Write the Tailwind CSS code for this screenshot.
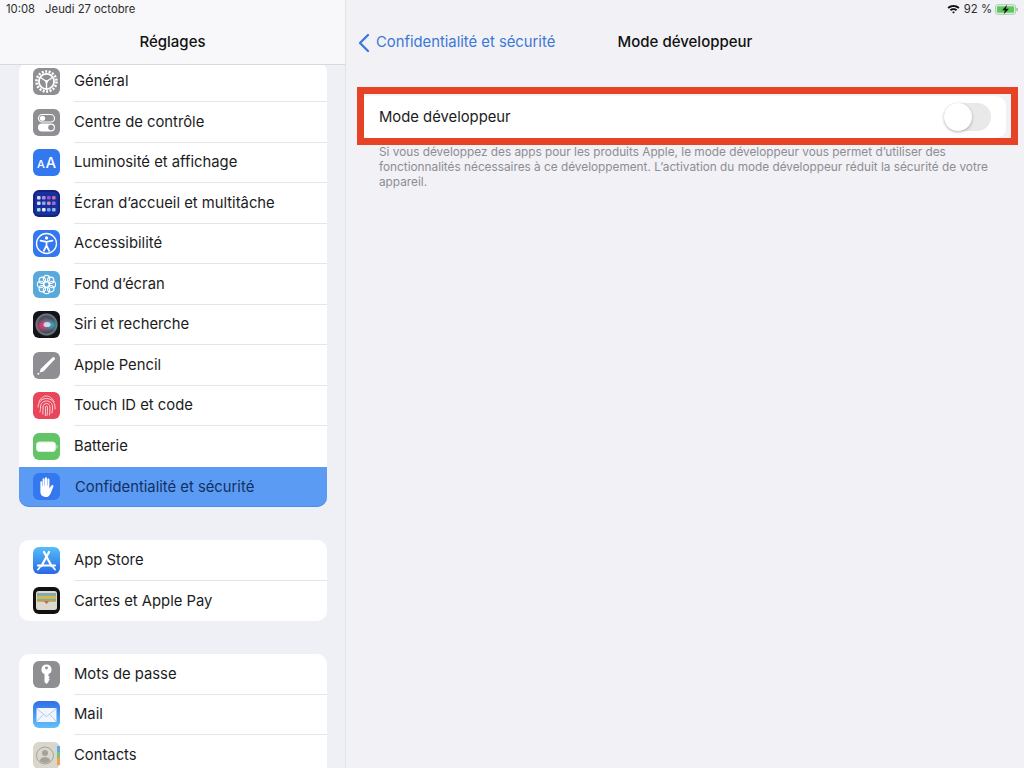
<!DOCTYPE html>
<html lang="fr">
<head>
  <meta charset="UTF-8">
  <title>Réglages - Mode développeur</title>
  <script src="https://cdn.jsdelivr.net/npm/@tailwindcss/browser@4"></script>
</head>
<body class="bg-[#f1f1f6] text-[#1c1c1e] font-['Inter',sans-serif] overflow-hidden">
<div class="flex w-[1024px] h-[768px] overflow-hidden">

  <!-- colonne des reglages -->
  <aside class="w-[346px] h-full shrink-0 bg-[#eff0f6] border-r border-[#e2e2e7] overflow-hidden">
    <header class="relative z-10 h-[65px] bg-[#f8f8fa] border-b border-[#d9d9dd]">
      <div class="flex gap-[10px] pl-[6px] pt-[2px] text-[11.3px] leading-[14px] text-[#2c2c2e]">
        <span>10:08</span><span>Jeudi 27 octobre</span>
      </div>
      <h1 class="mt-[16px] text-center text-[15px] leading-[20px] font-medium text-[#111]">Réglages</h1>
    </header>

    <div class="-mt-[3.5px] ml-[19px] w-[308px] flex flex-col gap-[33px] text-[14.8px]">
      <ul class="bg-white rounded-[10px]">
        <li class="flex h-[40.5px] items-center pl-[14px]">
          <svg class="w-[27px] h-[27px] shrink-0" viewBox="0 0 27 27"><rect width="27" height="27" rx="6" fill="#8e8e93"/><circle cx="13.5" cy="13.5" r="10" fill="none" stroke="#fff" stroke-width="2.6" stroke-dasharray="2 1.5"/><circle cx="13.5" cy="13.5" r="7.6" fill="none" stroke="#fff" stroke-width="1.8"/><path d="M13.5 13.5L7.5 9.5M13.5 13.5L19.5 9.5M13.5 13.5V21" stroke="#fff" stroke-width="1.4"/><circle cx="13.5" cy="13.5" r="1.5" fill="#fff"/></svg>
          <div class="ml-[14px] flex-1 h-full flex items-center border-b border-[#e5e5e8]">Général</div>
        </li>
        <li class="flex h-[40.5px] items-center pl-[14px]">
          <svg class="w-[27px] h-[27px] shrink-0" viewBox="0 0 27 27"><rect width="27" height="27" rx="6" fill="#8e8e93"/><rect x="5.5" y="5.5" width="16" height="7.5" rx="3.75" fill="none" stroke="#fff" stroke-width="1.2"/><circle cx="9.5" cy="9.25" r="2.6" fill="#fff"/><rect x="5" y="14.5" width="17" height="8" rx="4" fill="#fff"/><circle cx="18" cy="18.5" r="2.8" fill="#8e8e93"/></svg>
          <div class="ml-[14px] flex-1 h-full flex items-center border-b border-[#e5e5e8]">Centre de contrôle</div>
        </li>
        <li class="flex h-[40.5px] items-center pl-[14px]">
          <svg class="w-[27px] h-[27px] shrink-0" viewBox="0 0 27 27"><rect width="27" height="27" rx="6" fill="#3478f0"/><text x="4" y="19" font-family="Inter, sans-serif" font-size="11" font-weight="500" fill="#fff">A</text><text x="12.5" y="19" font-family="Inter, sans-serif" font-size="15" font-weight="500" fill="#fff">A</text></svg>
          <div class="ml-[14px] flex-1 h-full flex items-center border-b border-[#e5e5e8]">Luminosité et affichage</div>
        </li>
        <li class="flex h-[40.5px] items-center pl-[14px]">
          <svg class="w-[27px] h-[27px] shrink-0" viewBox="0 0 27 27"><rect width="27" height="27" rx="6" fill="#1a2f9e"/><rect x="1" y="1" width="25" height="25" rx="5" fill="none" stroke="#101a66" stroke-width="1"/>
            <g><rect x="4" y="6" width="3.6" height="3.6" rx="1" fill="#d9d9ee"/><rect x="9" y="6" width="3.6" height="3.6" rx="1" fill="#b68ad8"/><rect x="14" y="6" width="3.6" height="3.6" rx="1" fill="#8e5bc8"/><rect x="19" y="6" width="3.6" height="3.6" rx="1" fill="#d46aa0"/>
            <rect x="4" y="11.5" width="3.6" height="3.6" rx="1" fill="#cfe0f6"/><rect x="9" y="11.5" width="3.6" height="3.6" rx="1" fill="#7fb0ee"/><rect x="14" y="11.5" width="3.6" height="3.6" rx="1" fill="#e08ab0"/><rect x="19" y="11.5" width="3.6" height="3.6" rx="1" fill="#8a78d8"/>
            <rect x="4" y="18" width="3.6" height="3.6" rx="1" fill="#9fe0d0"/><rect x="9" y="18" width="3.6" height="3.6" rx="1" fill="#e6eef8"/><rect x="14" y="18" width="3.6" height="3.6" rx="1" fill="#6fa8ee"/><rect x="19" y="18" width="3.6" height="3.6" rx="1" fill="#9fb8ee"/></g></svg>
          <div class="ml-[14px] flex-1 h-full flex items-center border-b border-[#e5e5e8]">Écran d’accueil et multitâche</div>
        </li>
        <li class="flex h-[40.5px] items-center pl-[14px]">
          <svg class="w-[27px] h-[27px] shrink-0" viewBox="0 0 27 27"><rect width="27" height="27" rx="6" fill="#3478f0"/><circle cx="13.5" cy="13.5" r="10" fill="none" stroke="#fff" stroke-width="1.3"/><circle cx="13.5" cy="8" r="1.7" fill="#fff"/><path d="M7.5 10.6L13.5 11.8L19.5 10.6M13.5 11.8V15.5M13.5 15.5L10.8 20.8M13.5 15.5L16.2 20.8" fill="none" stroke="#fff" stroke-width="1.7" stroke-linecap="round"/></svg>
          <div class="ml-[14px] flex-1 h-full flex items-center border-b border-[#e5e5e8]">Accessibilité</div>
        </li>
        <li class="flex h-[40.5px] items-center pl-[14px]">
          <svg class="w-[27px] h-[27px] shrink-0" viewBox="0 0 27 27"><rect width="27" height="27" rx="6" fill="#59a9da"/><g fill="none" stroke="#fff" stroke-width="1.1"><circle cx="13.5" cy="13.5" r="2.8"/><circle cx="13.5" cy="7.6" r="3.2"/><circle cx="13.5" cy="19.4" r="3.2"/><circle cx="7.6" cy="13.5" r="3.2"/><circle cx="19.4" cy="13.5" r="3.2"/><circle cx="9.3" cy="9.3" r="3.2"/><circle cx="17.7" cy="9.3" r="3.2"/><circle cx="9.3" cy="17.7" r="3.2"/><circle cx="17.7" cy="17.7" r="3.2"/></g></svg>
          <div class="ml-[14px] flex-1 h-full flex items-center border-b border-[#e5e5e8]">Fond d’écran</div>
        </li>
        <li class="flex h-[40.5px] items-center pl-[14px]">
          <svg class="w-[27px] h-[27px] shrink-0" viewBox="0 0 27 27"><defs><radialGradient id="siriA" cx="0.5" cy="0.5" r="0.5"><stop offset="0" stop-color="#8a8aa8"/><stop offset="0.7" stop-color="#4a465c"/><stop offset="0.9" stop-color="#6a8078"/><stop offset="1" stop-color="#20242a"/></radialGradient><radialGradient id="siriB" cx="0.5" cy="0.5" r="0.5"><stop offset="0" stop-color="#e8386e" stop-opacity=".9"/><stop offset="1" stop-color="#e8386e" stop-opacity="0"/></radialGradient><radialGradient id="siriC" cx="0.5" cy="0.5" r="0.5"><stop offset="0" stop-color="#2fc0d8" stop-opacity=".8"/><stop offset="1" stop-color="#2fc0d8" stop-opacity="0"/></radialGradient></defs><rect width="27" height="27" rx="6" fill="#14121a"/><circle cx="13.5" cy="13.5" r="11.5" fill="url(#siriA)"/><circle cx="8.5" cy="15" r="6.5" fill="url(#siriB)"/><circle cx="19" cy="14" r="6" fill="url(#siriC)"/><ellipse cx="14" cy="13.5" rx="3.5" ry="2.6" fill="#e8ecf8" opacity=".8"/></svg>
          <div class="ml-[14px] flex-1 h-full flex items-center border-b border-[#e5e5e8]">Siri et recherche</div>
        </li>
        <li class="flex h-[40.5px] items-center pl-[14px]">
          <svg class="w-[27px] h-[27px] shrink-0" viewBox="0 0 27 27"><rect width="27" height="27" rx="6" fill="#8e8e93"/><path d="M19.8 5.2C20.8 4.4 22.6 6.2 21.8 7.2L10.4 19.4L6.6 20.6L7.8 16.8Z" fill="#fff"/><circle cx="5.4" cy="21.8" r="1" fill="#fff"/></svg>
          <div class="ml-[14px] flex-1 h-full flex items-center border-b border-[#e5e5e8]">Apple Pencil</div>
        </li>
        <li class="flex h-[40.5px] items-center pl-[14px]">
          <svg class="w-[27px] h-[27px] shrink-0" viewBox="0 0 27 27"><rect width="27" height="27" rx="6" fill="#e8465a"/><g fill="none" stroke="#fbd5da" stroke-width="1" stroke-linecap="round"><path d="M6 9.5C8 5.5 11 4 13.5 4S19 5.5 21 9.5"/><path d="M5 15C5 10 9 6.5 13.5 6.5S22 10 22 15V17"/><path d="M7 20C7.5 18 7.5 16.5 7.5 15C7.5 11.5 10 9 13.5 9S19.5 11.5 19.5 15C19.5 17 19.5 19 19 21"/><path d="M9.8 22C10 20 10 17 10 15C10 13 11.5 11.5 13.5 11.5S17 13 17 15C17 17.5 17 20 16.5 23"/><path d="M12.3 23.5C12.5 21 12.5 17 12.5 15C12.5 14.3 13 14 13.5 14S14.5 14.3 14.5 15C14.5 18 14.5 21 14 23.5"/></g></svg>
          <div class="ml-[14px] flex-1 h-full flex items-center border-b border-[#e5e5e8]">Touch ID et code</div>
        </li>
        <li class="flex h-[40.5px] items-center pl-[14px]">
          <svg class="w-[27px] h-[27px] shrink-0" viewBox="0 0 27 27"><rect width="27" height="27" rx="6" fill="#62c466"/><rect x="3.5" y="9" width="19" height="9.5" rx="2.8" fill="#fff" stroke="#d8f0da" stroke-width="1"/><rect x="23.4" y="12" width="1.2" height="3.5" rx=".6" fill="#bfe8c2"/></svg>
          <div class="ml-[14px] flex-1 h-full flex items-center">Batterie</div>
        </li>
        <li class="flex h-[40.5px] items-center pl-[14px] bg-[#5b9bf4] rounded-b-[10px] shadow-[inset_0_-1px_0_#4d8de8]">
          <svg class="w-[27px] h-[27px] shrink-0" viewBox="0 0 27 27"><rect width="27" height="27" rx="6" fill="#3478f0"/><path d="M7.4 9.2C7.4 7.8 9.2 7.8 9.2 9.2V13H9.6V6.2C9.6 4.8 11.6 4.8 11.6 6.2V12.6H12V5.2C12 3.8 14 3.8 14 5.2V12.6H14.4V6.6C14.4 5.2 16.4 5.2 16.4 6.6V15.4L18.4 12.6C19.2 11.4 21 12.2 20.4 13.6L17.6 20.4C16.6 22.8 15 24 12.6 24C9.4 24 7.4 22 7.4 18.6Z" fill="#fff"/></svg>
          <div class="ml-[15px] flex-1 h-full flex items-center text-[#14305e]">Confidentialité et sécurité</div>
        </li>
      </ul>

      <ul class="bg-white rounded-[10px]">
        <li class="flex h-[40.5px] items-center pl-[14px]">
          <svg class="w-[27px] h-[27px] shrink-0" viewBox="0 0 27 27"><defs><linearGradient id="storeBg" x1="0" y1="0" x2="0" y2="1"><stop offset="0" stop-color="#55bdf8"/><stop offset="1" stop-color="#2a68e8"/></linearGradient></defs><rect width="27" height="27" rx="6" fill="url(#storeBg)"/><path d="M11 5L18.5 19M16 5L8.5 19M5 18.5H22" fill="none" stroke="#fff" stroke-width="2.2" stroke-linecap="round"/><path d="M5 22.5L7 20M22 22.5L20 20" stroke="#fff" stroke-width="1.8" stroke-linecap="round"/></svg>
          <div class="ml-[14px] flex-1 h-full flex items-center border-b border-[#e5e5e8]">App Store</div>
        </li>
        <li class="flex h-[40.5px] items-center pl-[14px]">
          <svg class="w-[27px] h-[27px] shrink-0" viewBox="0 0 27 27"><rect width="27" height="27" rx="6" fill="#111"/><rect x="3" y="4" width="21" height="19" rx="2.5" fill="#dcd8cc"/><rect x="4" y="6" width="19" height="3" fill="#8aa8b0"/><rect x="4" y="9" width="19" height="2.5" fill="#d8b84e"/><rect x="4" y="11.5" width="19" height="2.5" fill="#8eb070"/><path d="M4 14H23V14.5H16L13.5 17L11 14.5H4Z" fill="#d8654e"/></svg>
          <div class="ml-[14px] flex-1 h-full flex items-center">Cartes et Apple Pay</div>
        </li>
      </ul>

      <ul class="bg-white rounded-t-[10px]">
        <li class="flex h-[40.5px] items-center pl-[14px]">
          <svg class="w-[27px] h-[27px] shrink-0" viewBox="0 0 27 27"><rect width="27" height="27" rx="6" fill="#8e8e93"/><path d="M13.5 3.5A5 5 0 0 1 15.5 13.1V15L16.8 16.2L15.5 17.4L16.8 18.6L15.5 20L15.5 21L13.5 23L11.5 21V13.1A5 5 0 0 1 13.5 3.5Z" fill="#fff"/><circle cx="13.5" cy="7" r="1.4" fill="#8e8e93"/></svg>
          <div class="ml-[14px] flex-1 h-full flex items-center border-b border-[#e5e5e8]">Mots de passe</div>
        </li>
        <li class="flex h-[40.5px] items-center pl-[14px]">
          <svg class="w-[27px] h-[27px] shrink-0" viewBox="0 0 27 27"><defs><linearGradient id="mailBg" x1="0" y1="0" x2="0" y2="1"><stop offset="0" stop-color="#2f6fe8"/><stop offset="1" stop-color="#64bff8"/></linearGradient></defs><rect width="27" height="27" rx="6" fill="url(#mailBg)"/><rect x="3.5" y="7" width="20" height="14" rx="1.5" fill="#f2f6fc"/><path d="M3.5 7.5L13.5 15.5L23.5 7.5M3.5 20.5L10.5 13.2M23.5 20.5L16.5 13.2" fill="none" stroke="#a9cdf2" stroke-width="1"/></svg>
          <div class="ml-[14px] flex-1 h-full flex items-center border-b border-[#e5e5e8]">Mail</div>
        </li>
        <li class="flex h-[40.5px] items-center pl-[14px]">
          <svg class="w-[27px] h-[27px] shrink-0" viewBox="0 0 27 27"><rect width="27" height="27" rx="6" fill="#d9d6cc"/><rect x="24" y="4" width="3" height="6" fill="#5fa8e8"/><rect x="24" y="10" width="3" height="6" fill="#7cc07a"/><rect x="24" y="16" width="3" height="7" fill="#f0a050"/><circle cx="12" cy="13.5" r="8.5" fill="none" stroke="#a5a29a" stroke-width="1"/><circle cx="12" cy="11" r="3" fill="#a5a29a"/><path d="M6.5 19C7.5 16 9.5 15 12 15S16.5 16 17.5 19A8.5 8.5 0 0 1 6.5 19Z" fill="#a5a29a"/></svg>
          <div class="ml-[14px] flex-1 h-full flex items-center border-b border-[#e5e5e8]">Contacts</div>
        </li>
      </ul>
    </div>
  </aside>

  <!-- detail -->
  <main class="relative flex-1 h-full">
    <div class="flex justify-end items-center gap-[3px] h-[18px] pr-[6px] text-[11.3px] text-[#2c2c2e]">
      <svg class="w-[13px] h-[10px] mr-[1px]" viewBox="0 0 13 10"><path d="M.5 3.4C4 .2 9 .2 12.5 3.4L11.2 4.8C8.4 2.3 4.6 2.3 1.8 4.8Z" fill="#111"/><path d="M2.8 5.6C4.9 3.8 8.1 3.8 10.2 5.6L8.9 7C7.5 5.8 5.5 5.8 4.1 7Z" fill="#111"/><path d="M5 8C5.9 7.3 7.1 7.3 8 8L6.5 9.6Z" fill="#111"/></svg>
      <span>92 %</span>
      <svg class="w-[23px] h-[11px]" viewBox="0 0 24 11"><rect x=".5" y=".5" width="21" height="10" rx="2.5" fill="none" stroke="#9ccf9e"/><rect x="2" y="2" width="18" height="7" rx="1.2" fill="#5ec85c"/><rect x="22.4" y="3.8" width="1.2" height="3.4" rx=".6" fill="#9a9a9a"/><path d="M12.6 .6L7.4 6.2H10.4L9.2 10.4L14.6 4.6H11.4Z" fill="#111"/></svg>
    </div>

    <nav class="grid grid-cols-[1fr_auto_1fr] items-center h-[47px] mt-[1px] text-[14.8px]">
      <a class="flex items-center pl-[11px] text-[#3b78d6]">
        <svg class="w-[13px] h-[20px] mr-[6px]" viewBox="0 0 13 20"><path d="M11 2L3 10L11 18" fill="none" stroke="#3b78d6" stroke-width="2.3" stroke-linecap="round" stroke-linejoin="round"/></svg>
        Confidentialité et sécurité
      </a>
      <h2 class="font-medium text-[15px] text-[#111]">Mode développeur</h2>
      <span></span>
    </nav>

    <section class="mt-[30px] ml-[12px] mr-[18px] h-[42px] bg-white rounded-[10px] flex items-center justify-between pl-[21px] pr-[15px] text-[14.8px]">
      <span>Mode développeur</span>
      <span class="relative block w-[47px] h-[28px] rounded-full bg-[#e9e9ea]">
        <span class="absolute left-0 top-0 w-[28px] h-[28px] rounded-full bg-white shadow-[0_1px_3px_rgba(0,0,0,0.3)]"></span>
      </span>
    </section>

    <p class="mt-[7px] ml-[33px] text-[11.8px] leading-[15px] text-[#8d8d92] whitespace-nowrap">
      Si vous développez des apps pour les produits Apple, le mode développeur vous permet d’utiliser des<br>
      fonctionnalités nécessaires à ce développement. L’activation du mode développeur réduit la sécurité de votre<br>
      appareil.
    </p>

    <!-- cadre rouge d'annotation -->
    <div class="absolute left-[11px] top-[87px] w-[661px] h-[58px] border-[7px] border-[#e64225]"></div>
  </main>
</div>
</body>
</html>
